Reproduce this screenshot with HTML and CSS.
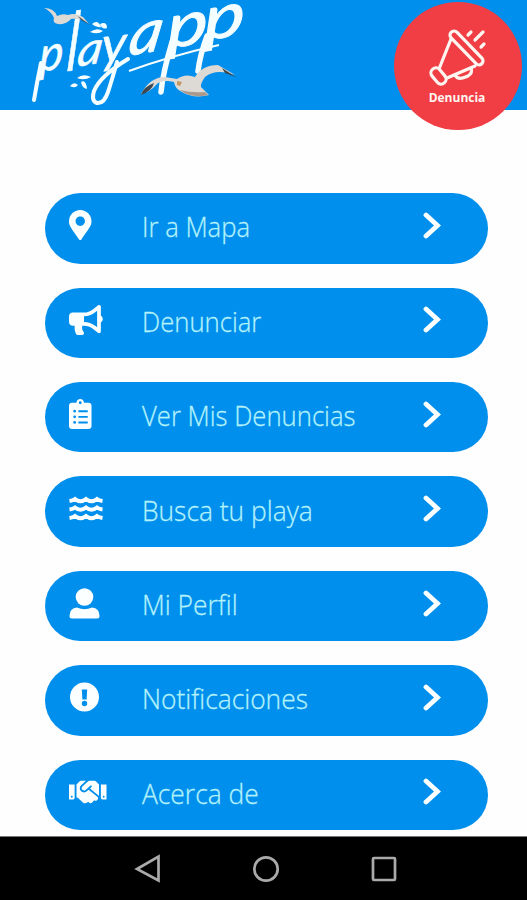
FILE: index.html
```
<!DOCTYPE html>
<html lang="es">
<head>
<meta charset="utf-8">
<title>playapp</title>
<link rel="stylesheet" href="styles.css">
</head>
<body>
<header class="header">
  <svg class="logo" viewBox="0 0 240 109" role="img" aria-label="playapp">
    <g class="lettering">
      <text class="script" transform="translate(19 72) rotate(-10) skewX(-12) scale(1.05 1.08)">p</text>
      <text class="script tall" transform="translate(46 71) rotate(-4) skewX(-8) scale(.85 1.35)">l</text>
      <text class="script" transform="translate(56 67) rotate(-10) skewX(-18) scale(1.12 1)">a</text>
      <text class="script deep" transform="translate(81 63) rotate(-6) skewX(-8) scale(1.05 1)">y</text>
      <text class="script big" transform="translate(107 56) rotate(-10) skewX(-20) scale(1.12 1)">a</text>
      <text class="script big" transform="translate(147 49) rotate(-10) skewX(-10) scale(1.36 1.04)">p</text>
      <text class="script big" transform="translate(184 41) rotate(-10) skewX(-10) scale(1.36 1.04)">p</text>
    </g>
    <path class="tail" d="M21 63Q17 82 14 100"/>
    <path class="tail" d="M97 62Q91 83 88 92Q84 104 77 103Q71 101 74 91Q80 76 108 59"/>
    <path class="tail heavy" d="M152 42Q143 72 141 92M187 36Q180 55 178 71"/>
    <path class="swash" d="M109 71Q150 56 199 45"/>
    <path class="leaf" d="M72 24q6-5 9 3q-5 1-9-3zM80 24q7-3 7 4q-5 2-7-4zM70 32q7-5 13-1q-5 4-13 1zM57 78q6-5 14-1q-7 4-14 1zM50 86q4-5 8-1q-3 4-8 1zM61 82q5-3 6 7q-5-1-6-7z"/>
    <path class="wing" d="M24 8Q34 8 37 16Q43 13 48 15Q55 12 63 17L69 24Q61 18 51 19Q46 25 38 24Q32 23 34 18Q31 11 24 8z"/>
    <path class="tip" d="M58 16L70 25L61 20z"/>
    <path class="wing" d="M121 94Q130 77 145 77L157 79Q165 73 175 77Q182 65 198 65L215 75Q196 68 185 77Q180 84 181 87L189 95Q174 99 162 92Q155 89 154 82Q141 79 136 85Q130 92 121 94z"/>
    <path class="shade" d="M160 90q11 3 25 2l3 3q-16 4-28-5z"/>
    <path class="tip" d="M121 95Q123 87 134 83Q132 91 121 95zM202 68L216 77L205 73z"/>
    <path class="beak" d="M157 81l5 1-2 4-3-1z"/>
  </svg>
  <a class="report" href="#">
    <svg class="report-icon" viewBox="0 0 58 58">
      <path d="M22 10L10 40M18 49L46 37"/>
      <path d="M26 46Q29 52 39 47Q44 44 42 39M39 6l3-3M46 11l8-8M52 18l3-3"/>
      <rect x="-4" y="-4" width="44" height="8" rx="4" transform="translate(25 6) rotate(46)"/>
      <rect x="-9" y="-5" width="18" height="10" rx="5" transform="translate(9.5 47) rotate(50)"/>
    </svg>
    <span class="report-label">Denuncia</span>
  </a>
</header>
<main class="menu">
  <a class="item" href="#"><span class="icon"><svg width="22.5" height="30" viewBox="0 0 384 512"><path d="M172.268 501.67C26.97 291.031 0 269.413 0 192 0 85.961 85.961 0 192 0s192 85.961 192 192c0 77.413-26.97 99.031-172.268 309.67-9.535 13.774-29.93 13.773-39.464 0zM192 272c44.183 0 80-35.817 80-80s-35.817-80-80-80-80 35.817-80 80 35.817 80 80 80z"/></svg></span><span class="label">Ir a Mapa</span><svg class="chevron" viewBox="0 0 18 27"><path d="M3 3L14.5 13.5L3 24"/></svg></a>
  <a class="item" href="#"><span class="icon"><svg width="33.75" height="30" viewBox="0 0 576 512"><path d="M576 240c0-23.63-12.95-44.04-32-55.12V32.01C544 23.26 537.02 0 512 0c-7.12 0-14.19 2.38-19.98 7.02l-85.03 68.03C364.28 109.19 310.66 128 256 128H64c-35.35 0-64 28.65-64 64v96c0 35.35 28.65 64 64 64h33.7c-1.39 10.48-2.18 21.14-2.18 32 0 39.77 9.26 77.35 25.56 110.94 5.19 10.69 16.52 17.06 28.4 17.06h74.28c26.05 0 41.69-29.84 25.9-50.56-16.4-21.52-26.15-48.36-26.15-77.44 0-11.11 1.62-21.79 4.41-32H256c54.66 0 108.28 18.81 150.98 52.95l85.03 68.03a32.023 32.023 0 0 0 19.98 7.02c24.92 0 32-22.78 32-32V295.13C563.05 284.04 576 263.63 576 240zm-96 141.42l-33.05-26.44C392.95 311.78 325.12 288 256 288v-96c69.12 0 136.95-23.78 190.95-66.98L480 98.58v282.84z"/></svg></span><span class="label">Denunciar</span><svg class="chevron" viewBox="0 0 18 27"><path d="M3 3L14.5 13.5L3 24"/></svg></a>
  <a class="item" href="#"><span class="icon"><svg width="22.5" height="30" viewBox="0 0 384 512"><path fill-rule="evenodd" d="M336 64h-80c0-35.3-28.7-64-64-64s-64 28.7-64 64H48C21.5 64 0 85.5 0 112v352c0 26.5 21.5 48 48 48h288c26.5 0 48-21.5 48-48V112c0-26.5-21.5-48-48-48zM192 40a24 24 0 1 1 0 48a24 24 0 1 1 0-48zM96 184a24 24 0 1 1 0 48a24 24 0 1 1 0-48zM96 280a24 24 0 1 1 0 48a24 24 0 1 1 0-48zM96 376a24 24 0 1 1 0 48a24 24 0 1 1 0-48zM160 192h160v32H160zM160 288h160v32H160zM160 384h160v32H160z"/></svg></span><span class="label">Ver Mis Denuncias</span><svg class="chevron" viewBox="0 0 18 27"><path d="M3 3L14.5 13.5L3 24"/></svg></a>
  <a class="item" href="#"><span class="icon"><svg class="waves" width="34" height="30" viewBox="0 0 34 30"><path d="M.5 7Q4 6.500 6 5Q11.500 9.500 17 5Q22.500 9.500 28 5Q30 6.500 33.500 7M.5 15.500Q4 15 6 13.500Q11.500 18 17 13.500Q22.500 18 28 13.500Q30 15 33.500 15.500M.5 24Q4 23.500 6 22Q11.500 26.500 17 22Q22.500 26.500 28 22Q30 23.500 33.500 24"/></svg></span><span class="label wide">Busca tu playa</span><svg class="chevron" viewBox="0 0 18 27"><path d="M3 3L14.5 13.5L3 24"/></svg></a>
  <a class="item" href="#"><span class="icon"><svg width="31" height="31" viewBox="0 0 31 31"><circle cx="15.5" cy="9" r="8.8"/><path d="M8 19.500Q15.500 23 23 19.500Q30.500 20 30.500 28Q30.500 30.500 28 30.500H3Q.5 30.500.5 28Q.5 20 8 19.500z"/></svg></span><span class="label wide">Mi Perfil</span><svg class="chevron" viewBox="0 0 18 27"><path d="M3 3L14.5 13.5L3 24"/></svg></a>
  <a class="item" href="#"><span class="icon"><svg width="31" height="30" viewBox="-.5 0 31 30"><path fill-rule="evenodd" d="M15 .5a14.500 14.500 0 1 1 0 29a14.500 14.500 0 1 1 0-29zM12.300 7.500L12.900 17.500H17.100L17.700 7.500zM15 18.800a2.700 2.700 0 1 0 0 5.400a2.700 2.700 0 1 0 0-5.400z"/></svg></span><span class="label wide">Notificaciones</span><svg class="chevron" viewBox="0 0 18 27"><path d="M3 3L14.5 13.5L3 24"/></svg></a>
  <a class="item" href="#"><span class="icon"><svg width="37.5" height="30" viewBox="0 0 640 512"><path d="M434.7 64h-85.9c-8 0-15.700 3-21.600 8.400l-98.300 90c-.1.1-.2.3-.3.4-16.600 15.600-16.300 40.500-2.100 56 12.700 13.900 39.400 17.600 56.100 2.700.1-.1.3-.1.4-.2l79.900-73.200c6.500-5.900 16.700-5.500 22.600 1 6 6.500 5.500 16.600-1 22.600l-26.100 23.900L504 313.800c2.900 2.400 5.500 5 7.900 7.700V128l-54.600-54.600c-5.900-6-14.100-9.400-22.600-9.400zM544 128.200v223.900c0 17.700 14.300 32 32 32h64V128.200h-96zm48 223.900c-8.800 0-16-7.200-16-16s7.200-16 16-16 16 7.200 16 16-7.200 16-16 16zM0 384h64c17.700 0 32-14.300 32-32V128.200H0V384zm48-63.900c8.800 0 16 7.200 16 16s-7.200 16-16 16-16-7.200-16-16c0-8.900 7.200-16 16-16zm435.900 18.600L334.600 217.500l-30 27.500c-29.700 27.100-75.200 24.500-101.700-4.400-26.900-29.400-24.800-74.900 4.400-101.700L289.100 64h-83.800c-8.500 0-16.600 3.400-22.600 9.400L128 128v223.900h18.300l90.500 81.900c27.400 22.300 67.700 18.100 90-9.300l.2-.2 17.900 15.500c15.900 13 39.400 10.500 52.300-5.400l31.400-38.600 5.400 4.400c13.700 11.100 33.900 9.100 45-4.700l9.500-11.700c11.200-13.800 9.100-33.900-4.600-45.100z"/></svg></span><span class="label wide">Acerca de</span><svg class="chevron" viewBox="0 0 18 27"><path d="M3 3L14.5 13.5L3 24"/></svg></a>
</main>
<nav class="navbar">
  <svg viewBox="0 0 28 30"><path d="M24.500 2.500V26.500L3 15z"/></svg>
  <svg viewBox="0 0 28 30"><circle cx="14" cy="15" r="11.7"/></svg>
  <svg viewBox="0 0 28 30"><rect x="3" y="4" width="22" height="22" rx="1"/></svg>
</nav>
</body>
</html>
```
FILE: styles.css
```
* { box-sizing: border-box; }

body {
  margin: 0;
  width: 527px;
  height: 900px;
  display: flex;
  flex-direction: column;
  overflow: hidden;
  background: #fefefe;
  font-family: "Open Sans", "Noto Sans", sans-serif;
}

a { color: inherit; text-decoration: none; }

.header {
  position: relative;
  height: 109.5px;
  flex: none;
  padding-left: 20px;
  background: #008fec;
}

.logo { display: block; width: 240px; height: 109px; overflow: visible; }
.script {
  font: italic 400 44px Lato, sans-serif;
  fill: #f4fdff;
  stroke: #f4fdff;
  stroke-width: .5px;
}
.tall { font-size: 60px; }
.deep { font-size: 50px; }
.big { font-size: 58px; stroke-width: .9px; }
.tail { fill: none; stroke: #f4fdff; stroke-width: 4; stroke-linecap: round; }
.heavy { stroke-width: 5.5; }
.swash { fill: none; stroke: #f4fdff; stroke-width: 2.2; }
.leaf { fill: #f4fdff; }
.wing { fill: #ddd9d4; }
.shade { fill: #a99a8d; }
.tip { fill: #3c4852; }
.beak { fill: #c49a62; }

.report {
  position: absolute;
  left: 394px;
  top: 2px;
  width: 128px;
  height: 128px;
  border-radius: 50%;
  background: #f03e44;
  color: #fff5f0;
  display: flex;
  flex-direction: column;
  align-items: center;
  padding-top: 27px;
}

.report-icon {
  width: 58px;
  height: 58px;
  fill: none;
  stroke: #fff5f0;
  stroke-width: 3.2;
  stroke-linecap: round;
}

.report-icon rect { fill: #f03e44; }

.report-label { margin: 3px 2px 0 0; font-size: 12px; line-height: 16px; font-weight: 700; }

.menu {
  flex: none;
  height: 726.5px;
  padding: 83.7px 39.5px 0 44.5px;
  display: flex;
  flex-direction: column;
  gap: 23.9px;
}

.item {
  flex: none;
  height: 70.5px;
  padding: 0 46.5px 6px 24.5px;
  border-radius: 36px;
  background: #008fec;
  display: flex;
  align-items: center;
}

.icon { width: 73px; height: 30px; fill: #fcffff; }
.icon svg { display: block; }
.icon .waves { fill: none; stroke: #fcffff; stroke-width: 3.9; }

.label {
  flex: 1;
  padding-top: 2px;
  color: #b4f2fb;
  font-size: 28px;
  font-weight: 300;
  line-height: 36px;
  white-space: nowrap;
  transform: scaleX(.917);
  transform-origin: left;
  -webkit-text-stroke: .3px #b4f2fb;
}

.wide { transform: scaleX(.942); }

.chevron {
  width: 18px;
  height: 27px;
  fill: none;
  stroke: #fcffff;
  stroke-width: 4.8;
  stroke-linecap: round;
}

.navbar {
  flex: 1;
  padding-left: 4px;
  background: #000;
  border-top: 1px solid #777;
  display: flex;
  align-items: center;
  justify-content: center;
  gap: 90px;
}

.navbar svg { width: 28px; height: 30px; fill: none; stroke: #aaa; stroke-width: 2.7; }
```
